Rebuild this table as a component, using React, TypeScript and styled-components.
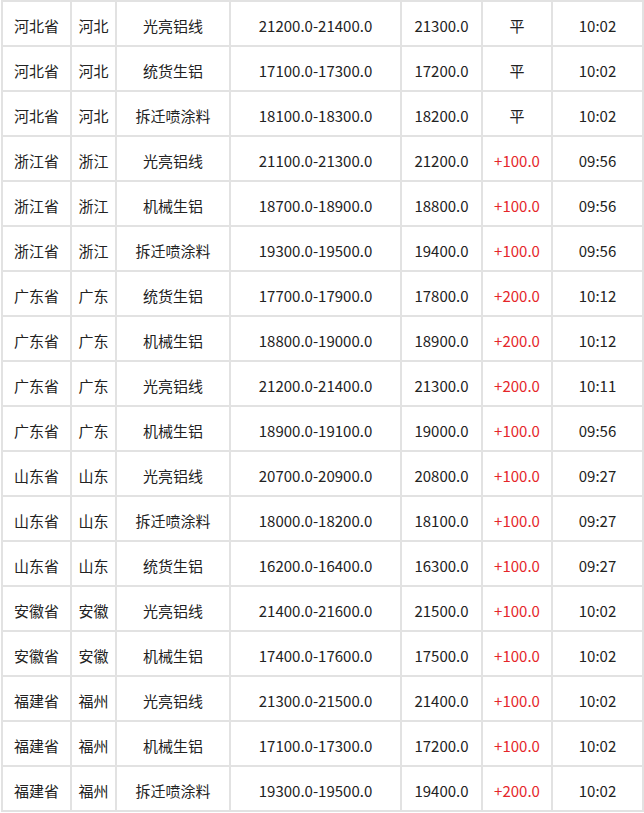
import React from "react";
import styled, { createGlobalStyle } from "styled-components";

const Global = createGlobalStyle`
  html, body { margin: 0; padding: 0; background: #fff; }
  body { font-family: "Noto Sans CJK SC", "Noto Sans", sans-serif; }
`;

const Wrap = styled.div`
  padding: 0 2px 0 1px;
`;

const Table = styled.table`
  border-collapse: collapse;
  table-layout: fixed;
  width: 641px;
  font-size: 15px;
  color: #222;
`;

const Cell = styled.td<{ $red?: boolean }>`
  border: 2px solid #e2e2e2;
  height: 39px;
  padding: 4px 0 0;
  text-align: center;
  vertical-align: middle;
  white-space: nowrap;
  color: ${(p) => (p.$red ? "#e5262a" : "#222")};
`;

const widths = [69, 45, 114, 171, 81, 70, 91];

type Row = [string, string, string, string, string, string, string];

const rows: Row[] = [
  ["河北省", "河北", "光亮铝线", "21200.0-21400.0", "21300.0", "平", "10:02"],
  ["河北省", "河北", "统货生铝", "17100.0-17300.0", "17200.0", "平", "10:02"],
  ["河北省", "河北", "拆迁喷涂料", "18100.0-18300.0", "18200.0", "平", "10:02"],
  ["浙江省", "浙江", "光亮铝线", "21100.0-21300.0", "21200.0", "+100.0", "09:56"],
  ["浙江省", "浙江", "机械生铝", "18700.0-18900.0", "18800.0", "+100.0", "09:56"],
  ["浙江省", "浙江", "拆迁喷涂料", "19300.0-19500.0", "19400.0", "+100.0", "09:56"],
  ["广东省", "广东", "统货生铝", "17700.0-17900.0", "17800.0", "+200.0", "10:12"],
  ["广东省", "广东", "机械生铝", "18800.0-19000.0", "18900.0", "+200.0", "10:12"],
  ["广东省", "广东", "光亮铝线", "21200.0-21400.0", "21300.0", "+200.0", "10:11"],
  ["广东省", "广东", "机械生铝", "18900.0-19100.0", "19000.0", "+100.0", "09:56"],
  ["山东省", "山东", "光亮铝线", "20700.0-20900.0", "20800.0", "+100.0", "09:27"],
  ["山东省", "山东", "拆迁喷涂料", "18000.0-18200.0", "18100.0", "+100.0", "09:27"],
  ["山东省", "山东", "统货生铝", "16200.0-16400.0", "16300.0", "+100.0", "09:27"],
  ["安徽省", "安徽", "光亮铝线", "21400.0-21600.0", "21500.0", "+100.0", "10:02"],
  ["安徽省", "安徽", "机械生铝", "17400.0-17600.0", "17500.0", "+100.0", "10:02"],
  ["福建省", "福州", "光亮铝线", "21300.0-21500.0", "21400.0", "+100.0", "10:02"],
  ["福建省", "福州", "机械生铝", "17100.0-17300.0", "17200.0", "+100.0", "10:02"],
  ["福建省", "福州", "拆迁喷涂料", "19300.0-19500.0", "19400.0", "+200.0", "10:02"],
];

export default function App() {
  return (
    <Wrap>
      <Global />
      <Table>
        <colgroup>
          {widths.map((w, i) => (
            <col key={i} style={{ width: w }} />
          ))}
        </colgroup>
        <tbody>
          {rows.map((r, i) => (
            <tr key={i}>
              {r.map((c, j) => (
                <Cell key={j} $red={j === 5 && c.startsWith("+")}>
                  {c}
                </Cell>
              ))}
            </tr>
          ))}
        </tbody>
      </Table>
    </Wrap>
  );
}
